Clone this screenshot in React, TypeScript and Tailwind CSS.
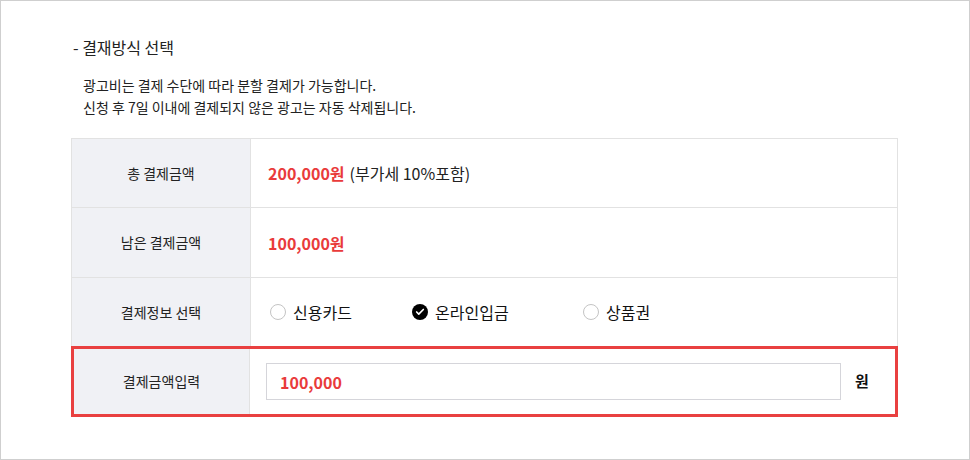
import { Check } from "lucide-react";

const font = {
  fontFamily: '"Noto Sans CJK KR", "Noto Sans", sans-serif',
};

function Radio({ label, checked }: { label: string; checked?: boolean }) {
  return (
    <label className="flex items-center gap-[7px] text-[16px] text-[#111]">
      {checked ? (
        <span className="flex h-4 w-4 items-center justify-center rounded-full bg-black">
          <Check className="h-[10px] w-[10px] text-white" strokeWidth={4} />
        </span>
      ) : (
        <span className="h-4 w-4 rounded-full border border-[#c4c4c4] bg-white" />
      )}
      {label}
    </label>
  );
}

export default function App() {
  return (
    <div
      className="h-[460px] w-[970px] border border-[#cfcfcf] bg-white text-[#222]"
      style={font}
    >
      <div className="pl-[72px] pt-[35px]">
        <h3 className="text-[16px] leading-[22px] text-[#222]">- 결재방식 선택</h3>
        <div className="mt-[16px] pl-[10px] text-[14px] leading-[22px] text-[#222]">
          <p>광고비는 결제 수단에 따라 분할 결제가 가능합니다.</p>
          <p>신청 후 7일 이내에 결제되지 않은 광고는 자동 삭제됩니다.</p>
        </div>
      </div>

      {/* TABLE */}
      <div className="ml-[70px] mt-[20px] w-[827px] border-t border-[#e2e2e2]">
        <div className="flex h-[69px] border-b border-x border-[#e2e2e2]">
          <div className="flex w-[179px] items-center justify-center border-r border-[#e2e2e2] bg-[#f0f1f5] text-[14px]">
            총 결제금액
          </div>
          <div className="flex items-center pl-[17px] text-[16px]">
            <span className="font-bold text-[#e93b3b]">200,000원</span>
            <span className="ml-[5px] text-[#222]">(부가세 10%포함)</span>
          </div>
        </div>
        <div className="flex h-[70px] border-b border-x border-[#e2e2e2]">
          <div className="flex w-[179px] items-center justify-center border-r border-[#e2e2e2] bg-[#f0f1f5] text-[14px]">
            남은 결제금액
          </div>
          <div className="flex items-center pl-[17px] text-[16px] font-bold text-[#e93b3b]">
            100,000원
          </div>
        </div>
        <div className="flex h-[68px] border-x border-[#e2e2e2]">
          <div className="flex w-[179px] items-center justify-center border-r border-[#e2e2e2] bg-[#f0f1f5] text-[14px]">
            결제정보 선택
          </div>
          <div className="flex items-center pl-[19px]">
            <div className="w-[142px]">
              <Radio label="신용카드" />
            </div>
            <div className="w-[171px]">
              <Radio label="온라인입금" checked />
            </div>
            <Radio label="상품권" />
          </div>
        </div>
        <div className="flex h-[71px] border-[3px] border-[#e94040]">
          <div className="flex w-[176px] items-center justify-center border-r border-[#e2e2e2] bg-[#f0f1f5] text-[14px]">
            결제금액입력
          </div>
          <div className="flex flex-1 items-center pl-[16px]">
            <div className="flex h-[37px] w-[575px] items-center border border-[#d5d5da] pl-[13px] text-[16px] font-bold text-[#e93b3b]">
              100,000
            </div>
            <span className="ml-[14px] text-[15px] font-bold text-[#111]">원</span>
          </div>
        </div>
      </div>
    </div>
  );
}
